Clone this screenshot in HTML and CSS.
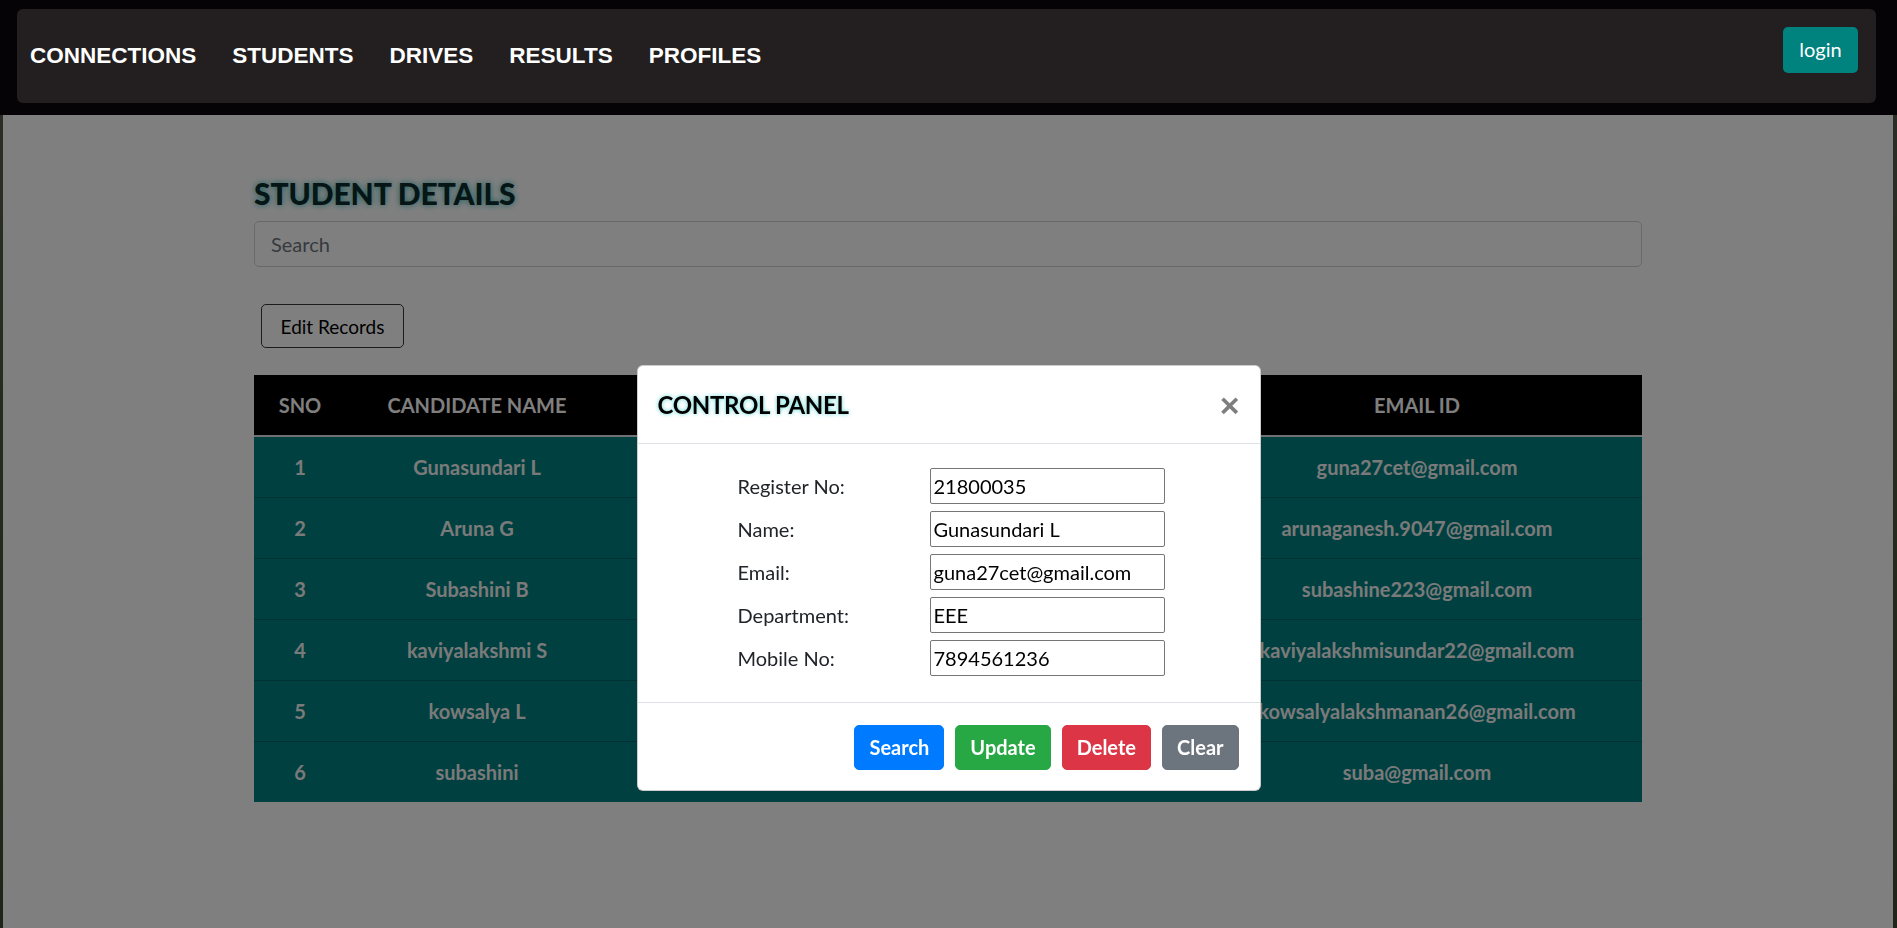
FILE: index.html
```html
<!DOCTYPE html>
<html lang="en">
<head>
<meta charset="utf-8">
<title>Student Details</title>
<link rel="stylesheet" href="styles.css">
</head>
<body>
<header class="topbar">
  <nav class="navbar">
    <ul class="nav-links">
      <li><a href="#">CONNECTIONS</a></li>
      <li><a href="#">STUDENTS</a></li>
      <li><a href="#">DRIVES</a></li>
      <li><a href="#">RESULTS</a></li>
      <li><a href="#">PROFILES</a></li>
    </ul>
    <button class="login-btn" type="button">login</button>
  </nav>
</header>

<main class="page">
  <div class="container">
    <h2 class="title">STUDENT DETAILS</h2>
    <input class="search" type="text" placeholder="Search">
    <div class="toolbar">
      <button class="btn-edit" type="button">Edit Records</button>
    </div>
    <table class="students">
      <colgroup>
        <col class="c-sno"><col class="c-name"><col class="c-mid"><col class="c-email">
      </colgroup>
      <thead>
        <tr><th>SNO</th><th>CANDIDATE NAME</th><th></th><th>EMAIL ID</th></tr>
      </thead>
      <tbody>
        <tr><td>1</td><td>Gunasundari L</td><td></td><td>guna27cet@gmail.com</td></tr>
        <tr><td>2</td><td>Aruna G</td><td></td><td>arunaganesh.9047@gmail.com</td></tr>
        <tr><td>3</td><td>Subashini B</td><td></td><td>subashine223@gmail.com</td></tr>
        <tr><td>4</td><td>kaviyalakshmi S</td><td></td><td>kaviyalakshmisundar22@gmail.com</td></tr>
        <tr><td>5</td><td>kowsalya L</td><td></td><td>kowsalyalakshmanan26@gmail.com</td></tr>
        <tr><td>6</td><td>subashini</td><td></td><td>suba@gmail.com</td></tr>
      </tbody>
    </table>
  </div>
</main>

<div class="backdrop"></div>

<div class="modal">
  <div class="modal-dialog">
    <div class="modal-header">
      <h5 class="modal-title">CONTROL PANEL</h5>
      <button class="close" type="button">&times;</button>
    </div>
    <div class="modal-body">
      <form class="panel-form">
        <label>Register No:</label><input type="text" value="21800035">
        <label>Name:</label><input type="text" value="Gunasundari L">
        <label>Email:</label><input type="text" value="guna27cet@gmail.com">
        <label>Department:</label><input type="text" value="EEE">
        <label>Mobile No:</label><input type="text" value="7894561236">
      </form>
    </div>
    <div class="modal-footer">
      <button class="btn btn-blue" type="button">Search</button>
      <button class="btn btn-green" type="button">Update</button>
      <button class="btn btn-red" type="button">Delete</button>
      <button class="btn btn-grey" type="button">Clear</button>
    </div>
  </div>
</div>
</body>
</html>
```

FILE: styles.css
```css
* { box-sizing: border-box; }

html, body { height: 100%; }

body {
  margin: 0;
  font-family: Lato, "Open Sans", sans-serif;
  font-size: 20px;
  color: #212529;
  background: linear-gradient(180deg, #5a5a52 0%, #4c5a3c 40%, #3e4a30 100%);
  display: flex;
  flex-direction: column;
  overflow: hidden;
}

/* ---------- top bar ---------- */
.topbar {
  position: relative;
  z-index: 20;
  background: #050305;
  padding: 9px 21px 12px 17px;
}

.navbar {
  height: 94px;
  background: #231f20;
  border-radius: 6px;
  display: flex;
  justify-content: space-between;
  align-items: flex-start;
  padding: 0 18px 0 13px;
}

.nav-links {
  list-style: none;
  margin: 0;
  padding: 0 0 1px;
  height: 94px;
  display: flex;
  align-items: center;
  gap: 36px;
}

.nav-links a {
  font-family: "Liberation Sans", Arial, sans-serif;
  font-weight: 700;
  font-size: 22.5px;
  color: #fff;
  text-decoration: none;
}

.login-btn {
  margin-top: 18px;
  height: 46px;
  width: 75px;
  border: none;
  border-radius: 5px;
  background: #00827f;
  color: #fff;
  font-family: Lato, sans-serif;
  font-size: 20px;
  padding: 0 0 3px;
}

/* ---------- page ---------- */
.page {
  flex: 1;
  background: #fff;
  margin: 0 4px 0 3px;
  padding-top: 60px;
}

.container {
  width: 1388px;
  margin: 0 auto;
}

.title {
  margin: 0 0 10px;
  font-size: 30px;
  line-height: 36px;
  font-weight: 900;
  letter-spacing: -0.1px;
  color: #0c2a2a;
  text-shadow: 0 0 6px #2fb5b5;
}

.search {
  display: block;
  width: 100%;
  height: 46px;
  border: 1px solid #ced4da;
  border-radius: 5px;
  padding: 0 16px;
  font-family: Lato, sans-serif;
  font-size: 20px;
  color: #495057;
  background: #fff;
}
.search::placeholder { color: #6c757d; }

.toolbar {
  padding: 37px 0 27px 7px;
}

.btn-edit {
  height: 44px;
  width: 143px;
  border: 1px solid #343a40;
  border-radius: 5px;
  background: transparent;
  color: #000;
  font-family: Lato, sans-serif;
  font-size: 19px;
}

.students {
  width: 1388px;
  table-layout: fixed;
  border-collapse: collapse;
  text-align: center;
}

.c-sno { width: 92px; }
.c-name { width: 262px; }
.c-mid { width: 584px; }
.c-email { width: 450px; }

.students th {
  background: #000;
  color: #fff;
  height: 61px;
  font-weight: 700;
  font-size: 20px;
  border-bottom: 2px solid #dee2e6;
}

.students td {
  background: #008080;
  color: #f4f4f4;
  height: 61px;
  padding-top: 2px;
  font-weight: 700;
  font-size: 20px;
  border-top: 1px solid #006464;
  white-space: nowrap;
}
.students tbody tr:first-child td { border-top: none; }

/* ---------- modal ---------- */
.backdrop {
  position: fixed;
  inset: 0;
  z-index: 10;
  background: rgba(0, 0, 0, 0.5);
}

.modal {
  position: fixed;
  inset: 0;
  z-index: 30;
}

.modal-dialog {
  width: 624px;
  margin: 365px auto 0;
  background: #fff;
  border-radius: 6px;
  border: 1px solid rgba(0, 0, 0, 0.2);
}

.modal-header {
  height: 78px;
  display: flex;
  align-items: center;
  justify-content: space-between;
  padding: 0 20px 0 20px;
  border-bottom: 1px solid #dee2e6;
}

.modal-title {
  margin: 0;
  font-size: 24px;
  font-weight: 700;
  letter-spacing: -0.3px;
  color: #000;
  text-shadow: 0 0 4px #5fd6d6;
}

.close {
  border: none;
  background: transparent;
  font-family: "Liberation Sans", Arial, sans-serif;
  font-size: 34px;
  font-weight: 700;
  color: #000;
  opacity: 0.5;
  padding: 0;
  line-height: 1;
  margin-right: 0;
}

.modal-body {
  padding: 24px 0 26px 100px;
}

.panel-form {
  display: grid;
  grid-template-columns: 192px 235px;
  row-gap: 7px;
  align-items: center;
}

.panel-form label {
  font-size: 20px;
  color: #212529;
}

.panel-form input {
  height: 36px;
  width: 235px;
  border: 1px solid #767676;
  border-radius: 2px;
  padding: 0 3px;
  font-family: Lato, sans-serif;
  font-size: 20px;
  color: #000;
}

.modal-footer {
  border-top: 1px solid #dee2e6;
  padding: 22px 21px 20px;
  display: flex;
  justify-content: flex-end;
  gap: 11px;
}

.btn {
  height: 45px;
  padding: 0 14px 2px;
  border: 1px solid transparent;
  border-radius: 5px;
  color: #fff;
  font-family: Lato, sans-serif;
  font-size: 20px;
  font-weight: 700;
}
.btn-blue { background: #007bff; border-color: #007bff; }
.btn-green { background: #28a745; border-color: #28a745; }
.btn-red { background: #dc3545; border-color: #dc3545; }
.btn-grey { background: #6c757d; border-color: #6c757d; }
```
